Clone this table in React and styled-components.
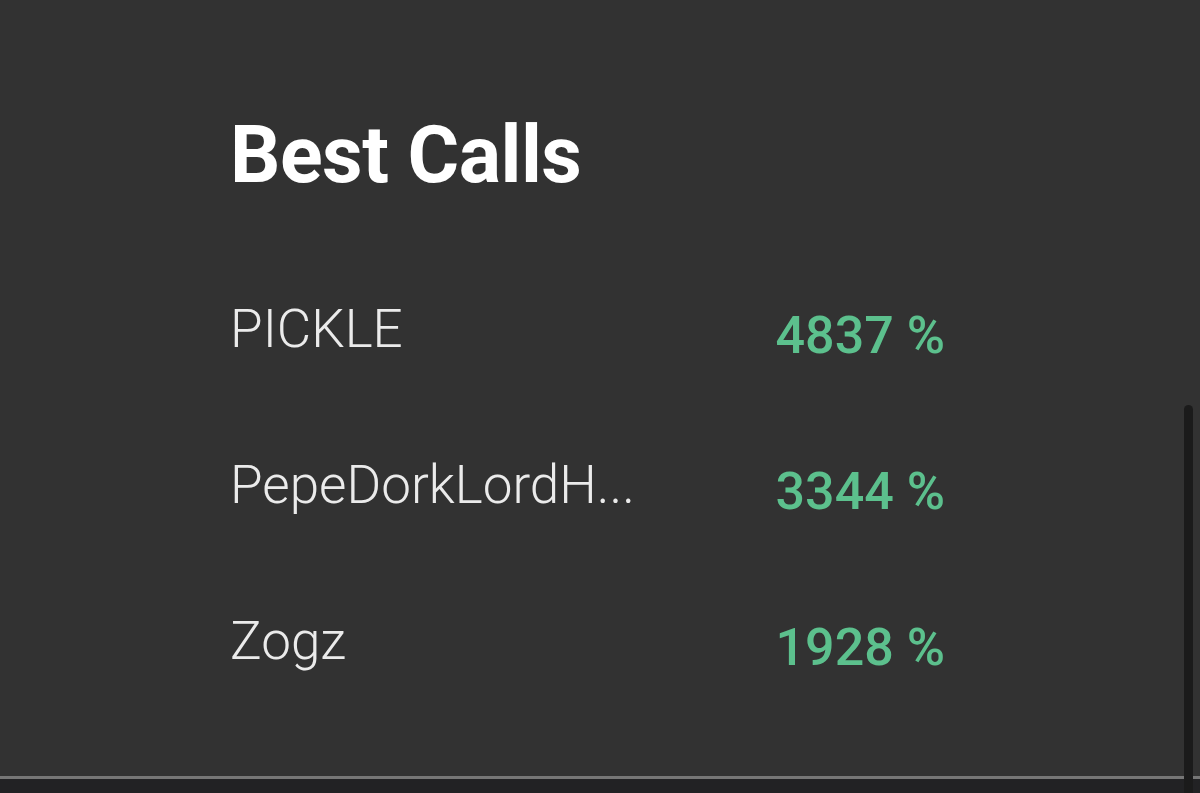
import React from "react";
import styled, { createGlobalStyle } from "styled-components";

const GlobalStyle = createGlobalStyle`
  html, body {
    margin: 0;
    padding: 0;
    background: #222224;
  }
  * {
    box-sizing: border-box;
  }
`;

const Page = styled.div`
  position: relative;
  width: 1200px;
  height: 793px;
  overflow: hidden;
  background: #222224;
  font-family: Roboto, "Noto Sans", sans-serif;
`;

const Panel = styled.div`
  height: 779px;
  padding: 116px 0 0 230px;
  background: #323232;
  border-bottom: 3px solid #767676;
`;

const Title = styled.h1`
  margin: 0 0 108px;
  font-size: 79px;
  line-height: 1;
  font-weight: 700;
  letter-spacing: -0.5px;
  color: #ffffff;
`;

const List = styled.div`
  display: flex;
  flex-direction: column;
  width: 715px;
`;

const Row = styled.div`
  display: flex;
  align-items: flex-start;
  justify-content: space-between;
  height: 156px;
`;

const Name = styled.div`
  max-width: 430px;
  font-size: 53px;
  line-height: 1;
  font-weight: 300;
  color: #ebebeb;
  white-space: nowrap;
`;

const Gain = styled.div`
  margin-top: 7px;
  font-size: 52px;
  line-height: 1;
  font-weight: 500;
  color: #5cc08d;
  white-space: nowrap;
`;

const ScrollThumb = styled.div`
  position: absolute;
  top: 405px;
  right: 7px;
  bottom: 0;
  width: 9px;
  border-radius: 5px 5px 0 0;
  background: #1b1b1b;
`;

const calls = [
  { name: "PICKLE", gain: 4837 },
  { name: "PepeDorkLordH...", gain: 3344 },
  { name: "Zogz", gain: 1928 },
];

export default function App() {
  return (
    <>
      <GlobalStyle />
      <Page>
        <Panel>
          <Title>Best Calls</Title>
          <List>
            {calls.map((c) => (
              <Row key={c.name}>
                <Name>{c.name}</Name>
                <Gain>{c.gain} %</Gain>
              </Row>
            ))}
          </List>
        </Panel>
        <ScrollThumb />
      </Page>
    </>
  );
}
